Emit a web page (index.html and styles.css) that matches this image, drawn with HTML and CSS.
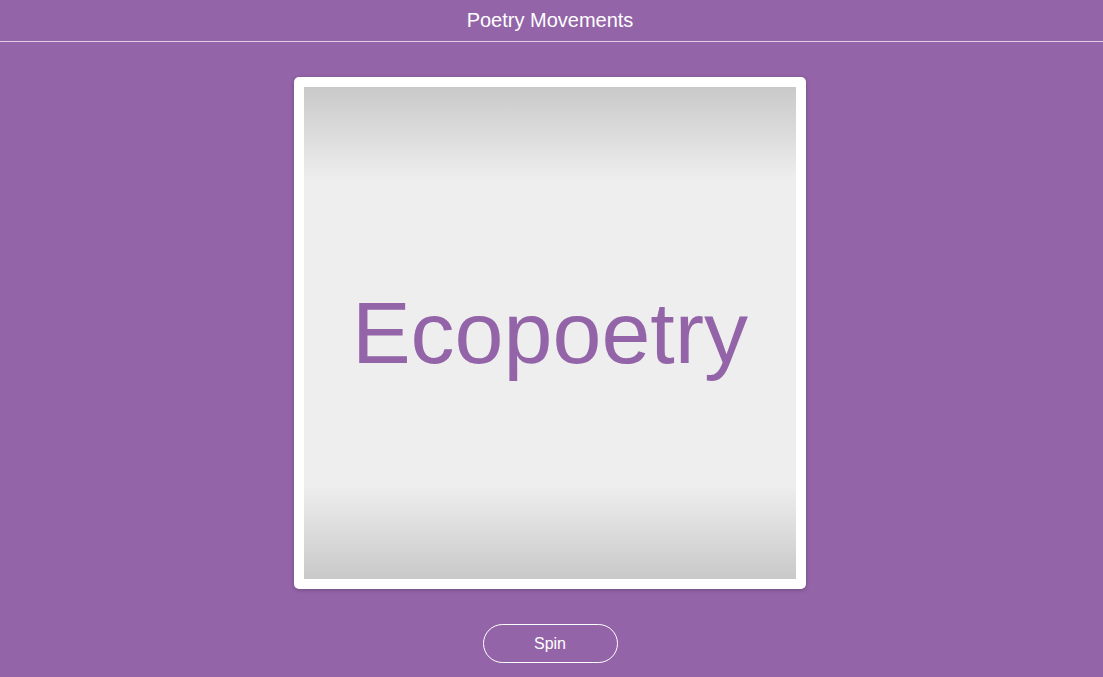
FILE: index.html
```html
<!DOCTYPE html>
<html lang="en">
<head>
  <meta charset="UTF-8" />
  <meta name="viewport" content="width=device-width, initial-scale=1.0"/>
  <title>Poetry Movements</title>
  <link rel="stylesheet" href="styles.css">
</head>
<body>

  <header class="topbar">Poetry Movements</header>

  <main class="stage">
    <!-- the spinner card -->
    <div class="card">
      <div class="face">
        <span class="word">Ecopoetry</span>
      </div>
    </div>

    <button class="spin-btn" type="button">Spin</button>
  </main>

</body>
</html>
```

FILE: styles.css
```css
body {
  margin: 0;
  padding-right: 3px;
  background-color: #9464a8;
  font-family: "Liberation Sans", Arial, sans-serif;
  color: #fff;
}

.topbar {
  height: 41px;
  line-height: 41px;
  text-align: center;
  font-size: 20px;
  border-bottom: 1px solid rgba(255, 255, 255, 0.7);
  margin-right: -3px;
  padding-right: 3px;
}

.stage {
  display: flex;
  flex-direction: column;
  align-items: center;
  padding-top: 35px;
  gap: 35px;
}

.card {
  width: 492px;
  height: 492px;
  padding: 10px;
  background: #fff;
  border-radius: 5px;
  box-shadow: 0 1px 4px rgba(0, 0, 0, 0.25);
}

.face {
  height: 100%;
  display: flex;
  align-items: center;
  justify-content: center;
  background: linear-gradient(to bottom,
    #c9c9c9 0%, #eeeeee 19%, #eeeeee 81%, #c9c9c9 100%);
}

.word {
  font-size: 88px;
  color: #9464a8;
}

.spin-btn {
  width: 135px;
  height: 39px;
  border: 1px solid #fff;
  border-radius: 20px;
  background: transparent;
  color: #fff;
  font-family: inherit;
  font-size: 16px;
  cursor: pointer;
}
```
